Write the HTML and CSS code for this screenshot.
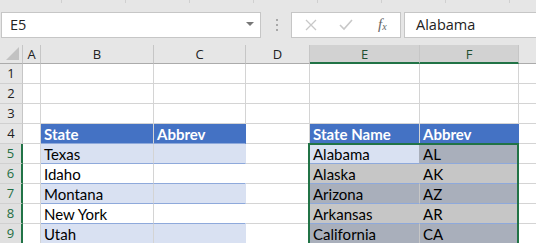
FILE: index.html
```html
<!DOCTYPE html>
<html lang="en">
<head>
  <meta charset="UTF-8" />
  <title>Sheet</title>
  <link rel="stylesheet" href="styles.css">
</head>
<body>
  <div class="ribbon-edge">
    <span></span><span></span><span></span><span></span><span></span><span></span><span></span><span></span>
  </div>
  <div class="formula-bar">
    <div class="name-box">
      <span>E5</span>
      <svg width="8" height="5" viewBox="0 0 8 5"><path d="M0 0h8L4 4z" fill="#777"/></svg>
    </div>
    <div class="grip"><i></i><i></i><i></i></div>
    <div class="fx-buttons">
      <svg width="12" height="12" viewBox="0 0 12 12"><path d="M1 1l10 10M11 1L1 11" stroke="#c8c8c8" stroke-width="1.3"/></svg>
      <svg width="14" height="12" viewBox="0 0 14 12"><path d="M1 6l4 4 8-9" stroke="#c8c8c8" stroke-width="1.6" fill="none"/></svg>
      <span class="fx">f<sub>x</sub></span>
    </div>
    <div class="formula-input">Alabama</div>
  </div>

  <div class="sheet">
    <div class="corner"><svg width="13" height="13" viewBox="0 0 13 13"><path d="M13 0v13H0z" fill="#c2c2c2"/></svg></div>
    <div class="col-head">A</div>
    <div class="col-head">B</div>
    <div class="col-head">C</div>
    <div class="col-head">D</div>
    <div class="col-head sel">E</div>
    <div class="col-head sel">F</div>
    <div class="col-head last"></div>

    <div class="row-head">1</div><div class="cell"></div><div class="cell"></div><div class="cell"></div><div class="cell"></div><div class="cell"></div><div class="cell"></div><div class="cell last"></div>
    <div class="row-head">2</div><div class="cell"></div><div class="cell"></div><div class="cell"></div><div class="cell"></div><div class="cell"></div><div class="cell"></div><div class="cell last"></div>
    <div class="row-head">3</div><div class="cell"></div><div class="cell"></div><div class="cell"></div><div class="cell"></div><div class="cell"></div><div class="cell"></div><div class="cell last"></div>

    <div class="row-head">4</div><div class="cell"></div>
    <div class="cell th">State</div><div class="cell th">Abbrev</div>
    <div class="cell"></div>
    <div class="cell th">State Name</div><div class="cell th">Abbrev</div>
    <div class="cell last"></div>

    <div class="row-head sel">5</div><div class="cell"></div>
    <div class="cell band">Texas</div><div class="cell band"></div>
    <div class="cell"></div>
    <div class="cell band active">Alabama</div><div class="cell band shade">AL</div>
    <div class="cell last"></div>

    <div class="row-head sel">6</div><div class="cell"></div>
    <div class="cell plain">Idaho</div><div class="cell plain"></div>
    <div class="cell"></div>
    <div class="cell plain shade">Alaska</div><div class="cell plain shade">AK</div>
    <div class="cell last"></div>

    <div class="row-head sel">7</div><div class="cell"></div>
    <div class="cell band">Montana</div><div class="cell band"></div>
    <div class="cell"></div>
    <div class="cell band shade">Arizona</div><div class="cell band shade">AZ</div>
    <div class="cell last"></div>

    <div class="row-head sel">8</div><div class="cell"></div>
    <div class="cell plain">New York</div><div class="cell plain"></div>
    <div class="cell"></div>
    <div class="cell plain shade">Arkansas</div><div class="cell plain shade">AR</div>
    <div class="cell last"></div>

    <div class="row-head sel">9</div><div class="cell"></div>
    <div class="cell band">Utah</div><div class="cell band"></div>
    <div class="cell"></div>
    <div class="cell band shade">California</div><div class="cell band shade">CA</div>
    <div class="cell last"></div>

    <div class="selection"></div>
  </div>
</body>
</html>
```

FILE: styles.css
```css
body {
  margin: 0;
  width: 536px;
  height: 243px;
  overflow: hidden;
  background-color: #e6e6e6;
  font-family: "Open Sans", "Noto Sans", sans-serif;
}
.ribbon-edge {
  display: flex;
  height: 3px;
  padding-left: 61px;
  gap: 63px;
}
.ribbon-edge span {
  width: 1px;
  background-color: #d0d0d0;
}
.formula-bar {
  display: flex;
  align-items: center;
  height: 42px;
  padding-top: 1px;
  box-sizing: border-box;
}
.name-box {
  display: flex;
  align-items: center;
  justify-content: space-between;
  margin-left: 1px;
  width: 260px;
  height: 26px;
  box-sizing: border-box;
  padding: 0 6px 0 8px;
  background-color: #fff;
  border: 1px solid #c6c6c6;
  font-size: 14.5px;
  color: #222;
}
.grip {
  width: 30px;
  display: flex;
  flex-direction: column;
  align-items: center;
  gap: 3px;
  padding-left: 2px;
  box-sizing: border-box;
}
.grip i {
  width: 2px;
  height: 2px;
  background-color: #a8a8a8;
}
.fx-buttons {
  display: flex;
  align-items: center;
  width: 110px;
  height: 26px;
  box-sizing: border-box;
  padding-left: 13px;
  gap: 22px;
  background-color: #fff;
  border: 1px solid #c6c6c6;
}
.fx {
  font-family: "Liberation Serif", serif;
  font-style: italic;
  font-size: 15px;
  color: #666;
  margin-left: 3px;
}
.fx sub {
  font-size: 10px;
  vertical-align: -1px;
}
.formula-input {
  flex: 1;
  margin-left: 3px;
  height: 26px;
  box-sizing: border-box;
  padding-left: 11px;
  line-height: 24px;
  background-color: #fff;
  border: 1px solid #c6c6c6;
  border-right: none;
  font-size: 14.5px;
  color: #222;
}
.sheet {
  position: relative;
  display: grid;
  grid-template-columns: 23px 18px 113px 92px 64px 110px 99px 1fr;
  grid-template-rows: 19px repeat(9, 20px);
  font-family: "Lato", "Liberation Sans", sans-serif;
  font-size: 15px;
}
.corner {
  display: flex;
  align-items: flex-end;
  justify-content: flex-end;
  padding: 0 3px 3px 0;
  border-right: 1px solid #c6c6c6;
  border-bottom: 1px solid #ababab;
}
.col-head {
  text-align: center;
  font-family: "Open Sans", "Noto Sans", sans-serif;
  font-size: 13px;
  line-height: 18px;
  color: #222;
  border-right: 1px solid #c6c6c6;
  border-bottom: 1px solid #ababab;
}
.col-head.sel {
  background-color: #d2d2d2;
  color: #1f4f30;
  border-bottom: 2px solid #217346;
}
.col-head.last {
  border-right: none;
}
.row-head {
  text-align: center;
  font-family: "Open Sans", "Noto Sans", sans-serif;
  font-size: 13px;
  line-height: 19px;
  color: #222;
  border-right: 1px solid #c6c6c6;
  border-bottom: 1px solid #d0d0d0;
}
.row-head.sel {
  background-color: #e0e0e0;
  color: #1e6e42;
  border-right: 2px solid #217346;
}
.cell {
  background-color: #fff;
  border-right: 1px solid #d4d4d4;
  border-bottom: 1px solid #d4d4d4;
  padding: 0 3px;
  line-height: 20px;
  white-space: nowrap;
  overflow: hidden;
  color: #000;
}
.cell.last {
  border-right: none;
}
.th {
  background-color: #4472c4;
  color: #fff;
  font-weight: bold;
  border-right-color: #4472c4;
  border-bottom-color: #8ea9db;
}
.band {
  background-color: #d9e1f2;
  border-right-color: #d9e1f2;
  border-bottom-color: #8ea9db;
}
.plain {
  border-right-color: #fff;
  border-bottom-color: #8ea9db;
}
.th + .th,
.band + .band,
.plain + .plain {
  border-left: 1px solid #d4d4d4;
  margin-left: -1px;
}
.band.shade {
  background-color: #a9afbb;
  border-right-color: #a9afbb;
}
.plain.shade {
  background-color: #c6c6c6;
  border-right-color: #c6c6c6;
}
.shade + .shade {
  border-left-color: #c6c6c6;
}
.active + .shade {
  border-left-color: #a9afbb;
}
.selection {
  position: absolute;
  left: 308px;
  top: 98px;
  width: 211px;
  height: 110px;
  border: 2px solid #217346;
  box-sizing: border-box;
  pointer-events: none;
}
```
